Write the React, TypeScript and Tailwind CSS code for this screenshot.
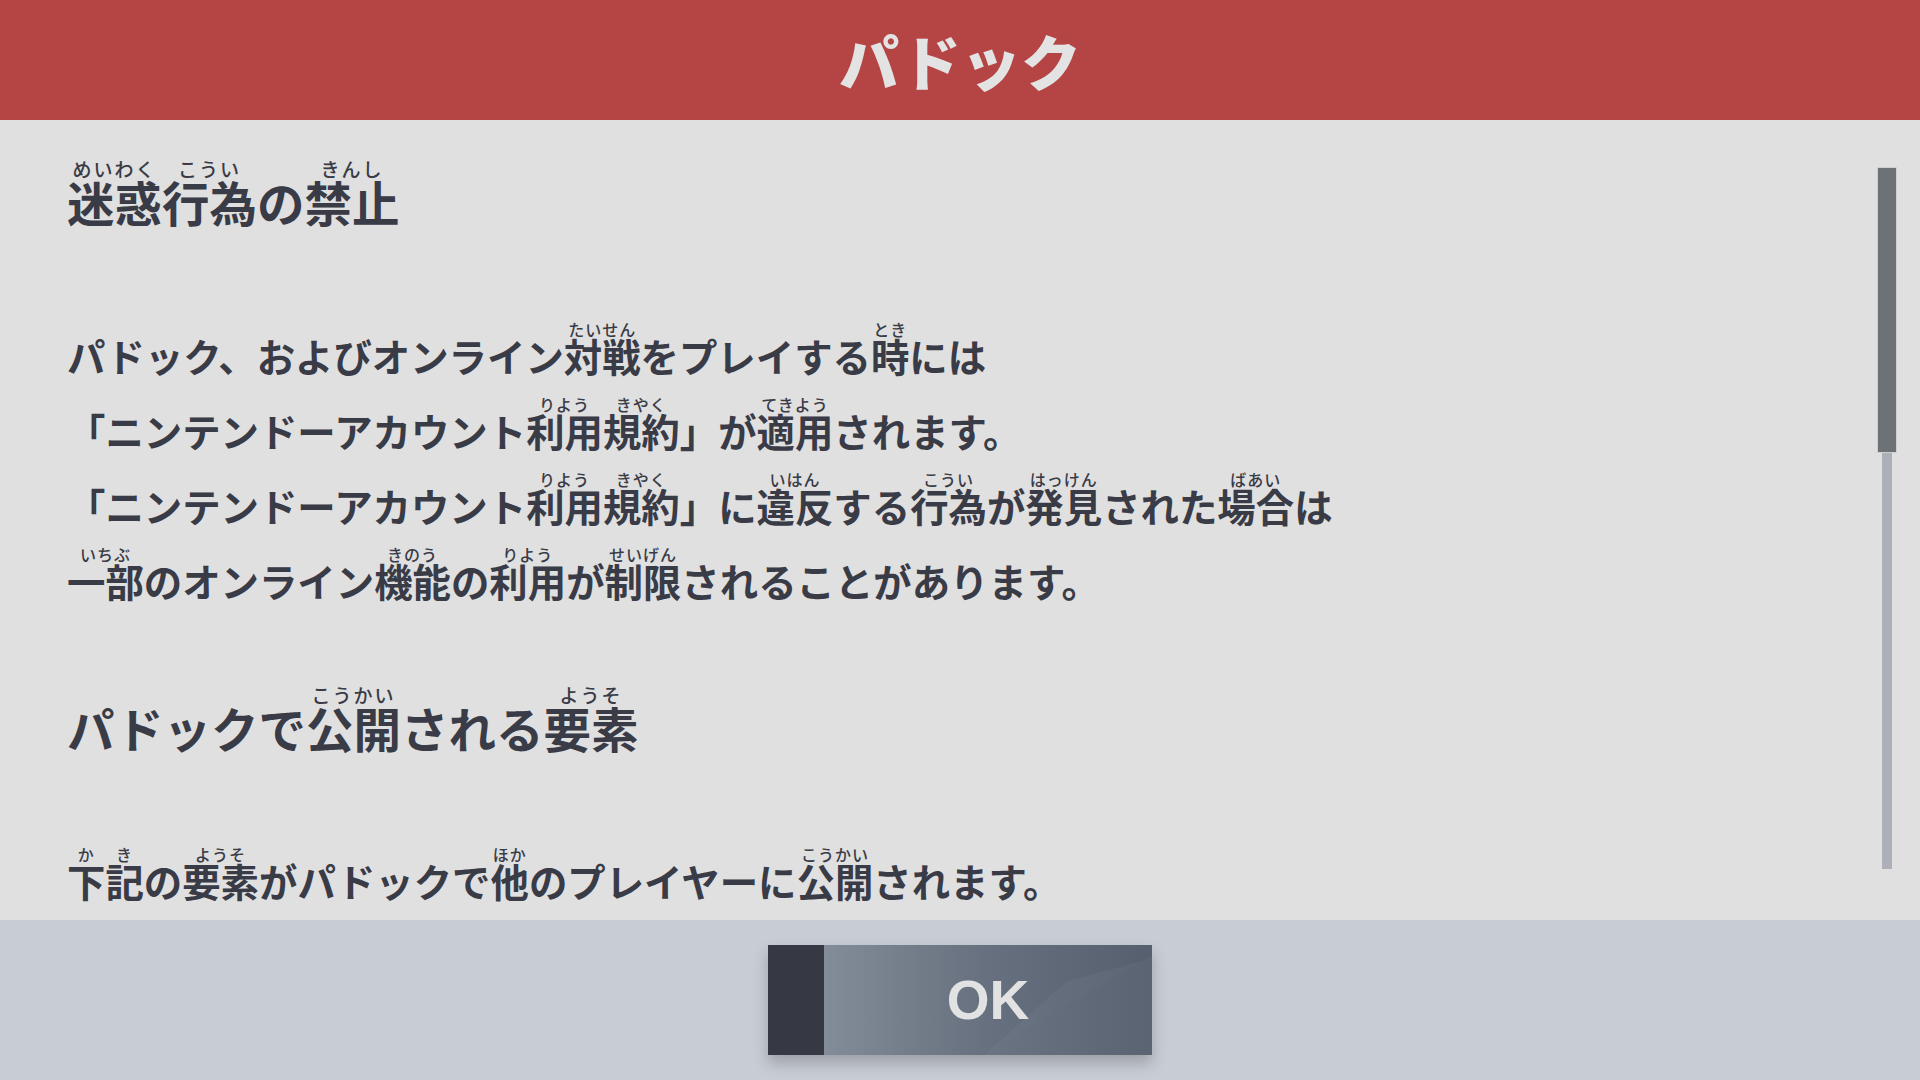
import type { ReactNode } from "react";

function R({ children, r, big }: { children: ReactNode; r: string; big?: boolean }) {
  return (
    <ruby className="[ruby-align:center]">
      {children}
      <rt
        className={
          big
            ? "text-[19px] font-medium tracking-[2px] [ruby-align:center]"
            : "text-[16px] font-medium tracking-[1px] [ruby-align:center]"
        }
      >
        {r}
      </rt>
    </ruby>
  );
}

function ScrollBar() {
  return (
    <div className="mr-[23px] flex w-[20px] flex-col items-center pt-[47px] pb-[51px]">
      <div className="h-[286px] w-[20px] border border-[#cfcfcf] bg-[#6c7276]" />
      <div className="w-[10px] flex-1 bg-[#adb0b8]" />
    </div>
  );
}

function OkButton() {
  return (
    <button className="flex h-[110px] w-[384px] shadow-[0_8px_14px_rgba(0,0,0,0.22)]">
      <div className="w-[56px] bg-[#363944]" />
      <div className="relative flex flex-1 items-center justify-center overflow-hidden bg-gradient-to-r from-[#838d99] via-[#66707e] to-[#555f6e]">
        <svg className="absolute inset-0" width="328" height="110" viewBox="0 0 328 110">
          <polygon points="160,110 328,10 328,110" fill="#ffffff" opacity="0.03" />
          <polygon points="243,36 318,16 160,110" fill="#ffffff" opacity="0.04" />
        </svg>
        <span className="relative font-['Liberation_Sans',Arial,sans-serif] text-[55px] leading-none font-bold text-[#e2e2e2]">
          OK
        </span>
      </div>
    </button>
  );
}

export default function App() {
  return (
    <div className="flex h-[1080px] w-[1920px] flex-col bg-[#e0e0e0] font-['Noto_Sans_CJK_JP',sans-serif] text-[#393b46]">
      <header className="flex h-[120px] items-center justify-center bg-[#b54444]">
        <h1 className="text-[60px] leading-none font-black text-[#e3e3e3]">パドック</h1>
      </header>

      <main className="flex flex-1 overflow-hidden">
        <div className="flex-1 pt-[40px] pl-[67px] font-bold whitespace-nowrap">
          <h2 className="text-[47.5px] leading-[60px]">
            <R r="めいわく" big>迷惑</R>
            <R r="こうい" big>行為</R>の<R r="きんし" big>禁止</R>
          </h2>

          <p className="mt-[86px] text-[38.4px] leading-[75px]">
            パドック、およびオンライン<R r="たいせん">対戦</R>をプレイする<R r="とき">時</R>には
            <br />
            「ニンテンドーアカウント<R r="りよう">利用</R><R r="きやく">規約</R>」が<R r="てきよう">適用</R>されます。
            <br />
            「ニンテンドーアカウント<R r="りよう">利用</R><R r="きやく">規約</R>」に<R r="いはん">違反</R>する
            <R r="こうい">行為</R>が<R r="はっけん">発見</R>された<R r="ばあい">場合</R>は
            <br />
            <R r="いちぶ">一部</R>のオンライン<R r="きのう">機能</R>の<R r="りよう">利用</R>が<R r="せいげん">制限</R>
            されることがあります。
          </p>

          <h2 className="mt-[68px] text-[47.5px] leading-[60px]">
            パドックで<R r="こうかい" big>公開</R>される<R r="ようそ" big>要素</R>
          </h2>

          <p className="mt-[85px] text-[38.4px] leading-[75px]">
            <R r="か">下</R><R r="き">記</R>の<R r="ようそ">要素</R>がパドックで<R r="ほか">他</R>のプレイヤーに
            <R r="こうかい">公開</R>されます。
          </p>
        </div>
        <ScrollBar />
      </main>

      <footer className="flex h-[160px] items-center justify-center bg-[#c8ccd4]">
        <OkButton />
      </footer>
    </div>
  );
}
